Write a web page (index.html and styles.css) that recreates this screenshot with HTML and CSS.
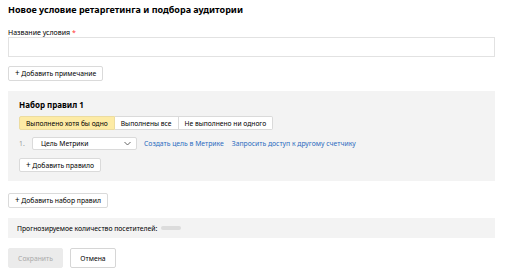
FILE: index.html
```html
<!DOCTYPE html>
<html lang="ru">
<head>
    <meta charset="UTF-8">
    <meta name="viewport" content="width=device-width, initial-scale=1.0">
    <title>Новое условие ретаргетинга</title>
    <link rel="stylesheet" href="styles.css">
</head>
<body>
    <div class="page">
        <h1>Новое условие ретаргетинга и подбора аудитории</h1>

        <label class="field-label">Название условия <span class="req">*</span></label>
        <input class="text-input" type="text">

        <button class="btn btn-add note-btn"><span class="plus">+</span> Добавить примечание</button>

        <!-- Rule set -->
        <div class="ruleset">
            <div class="ruleset-title">Набор правил 1</div>

            <div class="segments">
                <span class="segment active">Выполнено хотя бы одно</span>
                <span class="segment">Выполнены все</span>
                <span class="segment">Не выполнено ни одного</span>
            </div>

            <div class="rule-row">
                <span class="rule-num">1.</span>
                <div class="select">
                    <span>Цель Метрики</span>
                    <svg class="chevron" width="7" height="5" viewBox="0 0 7 5"><path d="M0.5 1 L3.5 4 L6.5 1" fill="none" stroke="#555" stroke-width="0.9"/></svg>
                </div>
                <a class="link" href="#">Создать цель в Метрике</a>
                <a class="link" href="#">Запросить доступ к другому счетчику</a>
            </div>

            <button class="btn btn-add"><span class="plus">+</span> Добавить правило</button>
        </div>

        <button class="btn btn-add set-btn"><span class="plus">+</span> Добавить набор правил</button>

        <div class="forecast">
            Прогнозируемое количество посетителей:
            <span class="forecast-value"></span>
        </div>

        <div class="actions">
            <button class="btn btn-save" disabled>Сохранить</button>
            <button class="btn btn-cancel">Отмена</button>
        </div>
    </div>
</body>
</html>
```

FILE: styles.css
```css
/* General */
body {
    margin: 0;
    font-family: 'Noto Sans', 'Liberation Sans', sans-serif;
    color: #000;
    background: #fff;
}

.page {
    width: 487px;
    padding: 3px 8px 0;
}

h1 {
    margin: 0;
    font-size: 9px;
    line-height: 14px;
    font-weight: 700;
}

.field-label {
    display: block;
    margin-top: 11px;
    font-size: 7px;
    line-height: 9px;
}

.req {
    color: #f33;
}

.text-input {
    display: block;
    box-sizing: border-box;
    width: 100%;
    height: 20px;
    margin: 0;
    border: 1px solid #e2e2e2;
    outline: none;
}

/* Buttons */
.btn {
    font-family: inherit;
    font-size: 6.8px;
    box-sizing: border-box;
    border-radius: 2px;
    border: 1px solid #dadada;
    background: #fff;
    color: #000;
    padding: 0 7px;
    cursor: pointer;
}

.btn-add {
    display: block;
    height: 15px;
    padding: 0 6px;
}

.plus {
    font-size: 8px;
    line-height: 1;
}

.note-btn {
    margin-top: 9px;
}

/* Rule set */
.ruleset {
    margin-top: 10px;
    background: #f3f3f3;
    padding: 8px 11px 9px;
}

.ruleset-title {
    font-size: 8px;
    font-weight: 700;
    line-height: 11px;
}

.segments {
    display: flex;
    margin-top: 6px;
    height: 14px;
}

.segment {
    display: flex;
    align-items: center;
    padding: 0 6px;
    font-size: 6.7px;
    background: #fff;
    border: 1px solid #dadada;
    border-left: none;
}

.segment:first-child {
    border-left: 1px solid #dadada;
    border-radius: 2px 0 0 2px;
}

.segment:last-child {
    border-radius: 0 2px 2px 0;
}

.segment.active {
    background: #fdeba5;
    border-color: #ecdca0;
}

.rule-row {
    display: flex;
    align-items: center;
    gap: 7px;
    margin-top: 7px;
    font-size: 6.8px;
}

.rule-num {
    color: #999;
    width: 6px;
}

.select {
    display: flex;
    align-items: center;
    justify-content: space-between;
    box-sizing: border-box;
    width: 105px;
    height: 13px;
    padding: 0 5px 0 8px;
    background: #fff;
    border: 1px solid #dadada;
    border-radius: 2px;
}

.link {
    color: #2a6bc0;
    text-decoration: none;
}

.link + .link {
    margin-left: 1px;
}

.ruleset .btn-add {
    margin-top: 8px;
    height: 14px;
}

.set-btn {
    margin-top: 12px;
}

/* Forecast */
.forecast {
    display: flex;
    align-items: center;
    gap: 4px;
    margin-top: 10px;
    height: 20px;
    padding: 0 9px;
    background: #f3f3f3;
    font-size: 6.8px;
}

.forecast-value {
    width: 20px;
    height: 4px;
    background: #dcdcdc;
    border-radius: 2px;
}

/* Actions */
.actions {
    display: flex;
    gap: 7px;
    margin-top: 10px;
}

.btn-save,
.btn-cancel {
    height: 20px;
    font-size: 6.8px;
}

.btn-save {
    width: 55px;
    background: #ebebeb;
    border-color: #ebebeb;
    color: #aaa;
    cursor: default;
}

.btn-cancel {
    width: 46px;
    border-color: #d6d6d6;
}
```
